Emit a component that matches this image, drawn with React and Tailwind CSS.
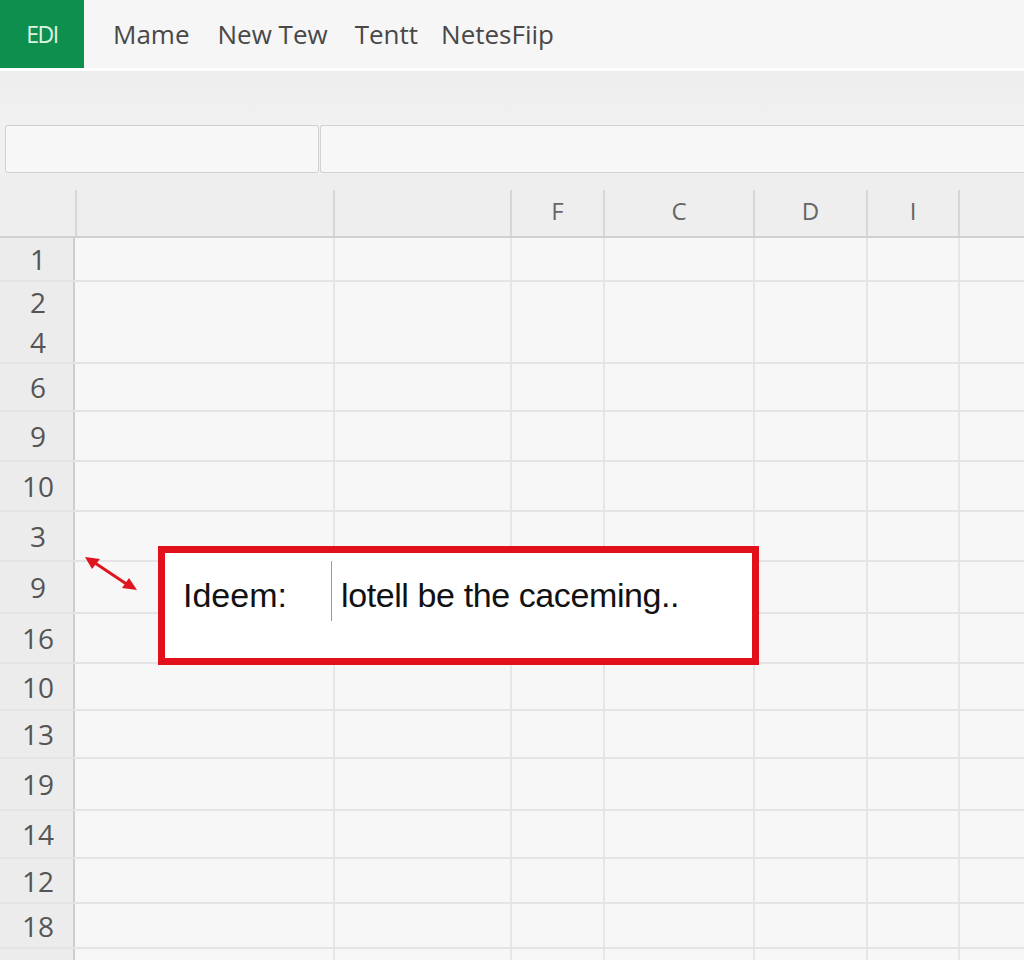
import React from "react";

const colLetters = ["", "", "", "F", "C", "D", "I", ""];
const rows = [
  { h: 44, labels: ["1"] },
  { h: 82, labels: ["2", "4"] },
  { h: 48, labels: ["6"] },
  { h: 50, labels: ["9"] },
  { h: 50, labels: ["10"] },
  { h: 50, labels: ["3"] },
  { h: 52, labels: ["9"] },
  { h: 50, labels: ["16"] },
  { h: 47, labels: ["10"] },
  { h: 48, labels: ["13"] },
  { h: 52, labels: ["19"] },
  { h: 48, labels: ["14"] },
  { h: 45, labels: ["12"] },
  { h: 45, labels: ["18"] },
  { h: 40, labels: [""] },
];

const tpl = "grid grid-cols-[75px_258px_177px_93px_150px_113px_92px_1fr]";

export default function App() {
  return (
    <div
      className="w-[1024px] h-[960px] overflow-hidden bg-[#f7f7f7] relative"
      style={{ fontFamily: '"Open Sans", "Noto Sans", sans-serif' }}
    >
      {/* Top menu bar */}
      <div className="h-[68px] flex items-stretch bg-[#f6f6f6]">
        <div className="w-[84px] bg-[#0f8f4e] flex items-center justify-center">
          <span className="text-[23px] text-[#dff3e4] tracking-[-1.5px] leading-none">EDI</span>
        </div>
        <div className="flex items-center pl-[29px] text-[26px] text-[#484848] leading-none pb-[1px]">
          <span>Mame</span>
          <span className="ml-[28px]">New Tew</span>
          <span className="ml-[27px]">Tentt</span>
          <span className="ml-[23px]">NetesFiip</span>
        </div>
      </div>
      <div className="h-[3px] bg-white" />
      {/* toolbar band */}
      <div className="h-[54px] bg-gradient-to-b from-[#ededed] to-[#f1f1f1]" />
      {/* formula bar */}
      <div className="h-[49px] flex bg-[#f0f0f0]">
        <div className="ml-[5px] w-[314px] h-[48px] border border-[#cfcfcf] rounded-[3px] bg-[#f7f7f7]" />
        <div className="ml-[1px] flex-1 h-[48px] border-y border-l border-[#d2d2d2] rounded-l-[3px] bg-[#f7f7f7]" />
      </div>
      {/* column header */}
      <div className={`${tpl} h-[64px] bg-[#eeeeee] border-b-2 border-[#d0d0d0]`}>
        {colLetters.map((l, i) => (
          <div key={i} className="flex items-end">
            <div
              className={`w-full h-[46px] flex items-center justify-center pb-[4px] text-[24px] text-[#666] ${
                i === 0 ? "" : "border-l-2 border-[#d6d6d6]"
              }`}
            >
              {l}
            </div>
          </div>
        ))}
      </div>
      {/* rows */}
      <div>
        {rows.map((r, ri) => (
          <div
            key={ri}
            className={`${tpl} border-b-2 border-[#e4e4e4]`}
            style={{ height: r.h }}
          >
            <div className="bg-[#ececec] border-r-2 border-[#cdcdcd] flex flex-col items-center justify-center text-[28px] text-[#555] leading-[40px] pl-[3px]">
              {r.labels.map((t, k) => (
                <span key={k}>{t}</span>
              ))}
            </div>
            {[0, 1, 2, 3, 4, 5, 6].map((c) => (
              <div key={c} className={c === 0 ? "" : "border-l-2 border-[#e6e6e6]"} />
            ))}
          </div>
        ))}
      </div>

      {/* resize arrow */}
      <svg
        className="absolute left-[82px] top-[554px]"
        width="60"
        height="42"
        viewBox="0 0 60 42"
      >
        <line x1="10" y1="7" x2="46" y2="31" stroke="#e0141e" strokeWidth="3" />
        <polygon points="3,3 18,5 10,15" fill="#e0141e" />
        <polygon points="55,36 40,34 47,24" fill="#e0141e" />
      </svg>

      {/* highlighted box */}
      <div className="absolute left-[158px] top-[546px] w-[601px] h-[119px] border-[7px] border-[#e2101b] bg-white flex items-center pb-[21px]">
        <div
          className="flex items-center w-full"
          style={{ fontFamily: '"Liberation Sans", Arial, sans-serif' }}
        >
          <span className="ml-[18px] w-[148px] text-[34px] text-[#111] leading-none">Ideem:</span>
          <div className="w-px h-[60px] bg-[#9a9a9a] mt-[20px] self-start -translate-y-[14px]" />
          <span className="ml-[9px] text-[34px] text-[#111] leading-none tracking-[-0.4px]">
            lotell be the caceming..
          </span>
        </div>
      </div>
    </div>
  );
}
